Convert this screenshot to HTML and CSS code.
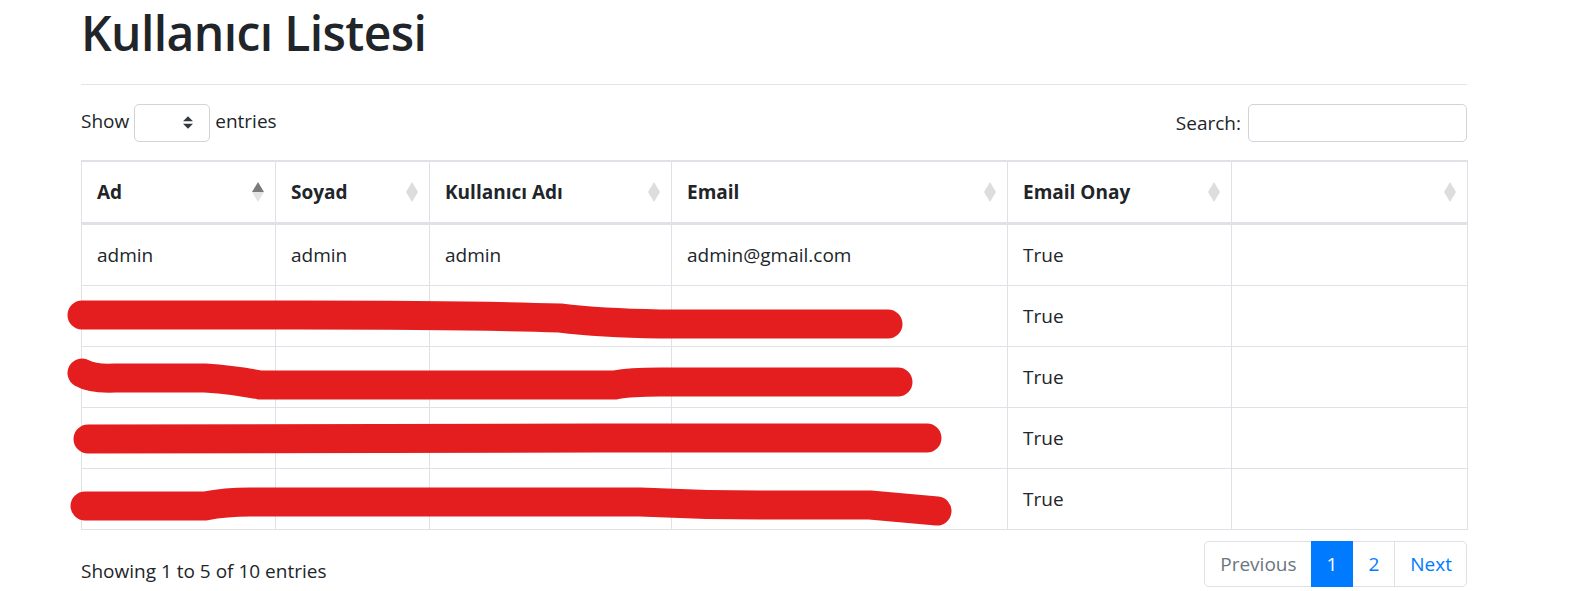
FILE: index.html
```html
<!DOCTYPE html>
<html lang="tr">
<head>
<meta charset="utf-8">
<title>Kullanıcı Listesi</title>
<link rel="stylesheet" href="styles.css">
</head>
<body>
<div class="page">
  <main class="container">
    <h1 class="title">Kullanıcı Listesi</h1>
    <hr class="rule">
    <div class="dt-top">
      <label class="dt-length">Show
        <span class="fake-select">
          <svg class="select-arrow" width="10" height="13" viewBox="0 0 4 5"><path fill="#343a40" d="M2 0L0 2h4zm0 5L0 3h4z"/></svg>
        </span>
        entries</label>
      <label class="dt-filter">Search: <input class="search-input" type="search"></label>
    </div>
    <table class="data-table">
      <colgroup>
        <col class="c1"><col class="c2"><col class="c3"><col class="c4"><col class="c5"><col class="c6">
      </colgroup>
      <thead>
        <tr>
          <th class="sort sort-asc">Ad</th>
          <th class="sort">Soyad</th>
          <th class="sort">Kullanıcı Adı</th>
          <th class="sort">Email</th>
          <th class="sort">Email Onay</th>
          <th class="sort"></th>
        </tr>
      </thead>
      <tbody>
        <tr><td>admin</td><td>admin</td><td>admin</td><td>admin@gmail.com</td><td>True</td><td></td></tr>
        <tr><td></td><td></td><td></td><td></td><td>True</td><td></td></tr>
        <tr><td></td><td></td><td></td><td></td><td>True</td><td></td></tr>
        <tr><td></td><td></td><td></td><td></td><td>True</td><td></td></tr>
        <tr><td></td><td></td><td></td><td></td><td>True</td><td></td></tr>
      </tbody>
    </table>
    <div class="dt-bottom">
      <div class="dt-info">Showing 1 to 5 of 10 entries</div>
      <ul class="pagination">
        <li class="page-item disabled"><span class="page-link">Previous</span></li>
        <li class="page-item active"><span class="page-link">1</span></li>
        <li class="page-item"><span class="page-link">2</span></li>
        <li class="page-item"><span class="page-link">Next</span></li>
      </ul>
    </div>
  </main>
  <svg class="redact" width="1572" height="591" viewBox="0 0 1572 591">
    <g fill="none" stroke="#e41e1e" stroke-width="29" stroke-linecap="round" stroke-linejoin="round">
      <path d="M82 312 L300 312 Q470 312 560 315 Q600 320 660 321 L888 321"/>
      <path d="M82 370 Q92 376 115 375 L205 375 Q235 377 260 382 L615 382 Q630 379 660 379 L898 379"/>
      <path d="M88 436 L600 435 L927 435"/>
      <path d="M85 503 L205 503 Q225 499 250 499 L640 499 Q700 502 760 502 L870 502 Q905 505 937 508"/>
    </g>
  </svg>
</div>
</body>
</html>
```
FILE: styles.css
```css
html, body {
  margin: 0;
  padding: 0;
  overflow: hidden;
  background: #fff;
}

body {
  font-family: "Open Sans", "Noto Sans", sans-serif;
  font-size: 19px;
  line-height: 30px;
  color: #212529;
}

.page {
  position: relative;
  width: 1572px;
  height: 591px;
}

.container {
  margin-left: 81px;
  width: 1386px;
}

.title {
  margin: 3px 0 0;
  font-size: 48px;
  line-height: 60px;
  font-weight: 600;
  letter-spacing: -0.6px;
}

.rule {
  margin: 21px 0 18px;
  border: 0;
  border-top: 1px solid #e3e4e6;
  height: 0;
}

.dt-top {
  display: flex;
  justify-content: space-between;
  align-items: center;
  height: 38px;
}

.dt-length {
  display: flex;
  align-items: center;
  gap: 5px;
  margin-top: -2px;
}

.fake-select {
  display: flex;
  align-items: center;
  justify-content: flex-end;
  box-sizing: border-box;
  width: 76px;
  height: 38px;
  padding-right: 16px;
  border: 1px solid #ced4da;
  border-radius: 5px;
  margin-top: 3px;
}

.select-arrow {
  display: block;
}

.dt-filter {
  display: flex;
  align-items: center;
  gap: 7px;
  margin-top: 2px;
}

.search-input {
  box-sizing: border-box;
  width: 219px;
  height: 38px;
  border: 1px solid #ced4da;
  border-radius: 5px;
  margin: 0;
  padding: 0 10px;
  font: inherit;
}

.data-table {
  margin-top: 19px;
  width: 1386px;
  border-collapse: collapse;
  table-layout: fixed;
}

.c1 { width: 194px; }
.c2 { width: 154px; }
.c3 { width: 242px; }
.c4 { width: 336px; }
.c5 { width: 224px; }
.c6 { width: 236px; }

.data-table th,
.data-table td {
  border: 1px solid #dee2e6;
  padding: 15px;
  line-height: 30px;
  height: 30px;
  text-align: left;
  vertical-align: top;
  white-space: nowrap;
}

.data-table th {
  font-weight: 700;
  border-top: 2px solid #dee2e6;
  border-bottom: 3px solid #dee2e6;
  position: relative;
}

.sort::before,
.sort::after {
  content: "";
  position: absolute;
  right: 11px;
  width: 0;
  height: 0;
  border-left: 6.5px solid transparent;
  border-right: 6.5px solid transparent;
}

.sort::before {
  top: 20px;
  border-bottom: 10px solid #dddddd;
}

.sort::after {
  top: 30px;
  border-top: 10px solid #dddddd;
}

.sort-asc::before {
  border-bottom-color: #7a7a7a;
}

.sort-asc::after {
  border-top-color: #e4e4e4;
}

.dt-bottom {
  display: flex;
  justify-content: space-between;
  align-items: flex-start;
  margin-top: 9px;
}

.dt-info {
  padding-top: 17px;
  line-height: 30px;
}

.pagination {
  display: flex;
  list-style: none;
  margin: 2px 0;
  padding: 0;
}

.page-item + .page-item {
  margin-left: -1px;
}

.page-link {
  display: block;
  padding: 10px 15px;
  line-height: 24px;
  border: 1px solid #dee2e6;
  color: #007bff;
  background: #fff;
}

.page-item:first-child .page-link {
  border-radius: 5px 0 0 5px;
}

.page-item:last-child .page-link {
  border-radius: 0 5px 5px 0;
  padding-right: 14px;
}

.page-item.disabled .page-link {
  color: #6c757d;
  padding-right: 14px;
}

.page-item.active .page-link {
  color: #fff;
  background: #007bff;
  border-color: #007bff;
  position: relative;
}

.redact {
  position: absolute;
  left: 0;
  top: 0;
  pointer-events: none;
}
```
